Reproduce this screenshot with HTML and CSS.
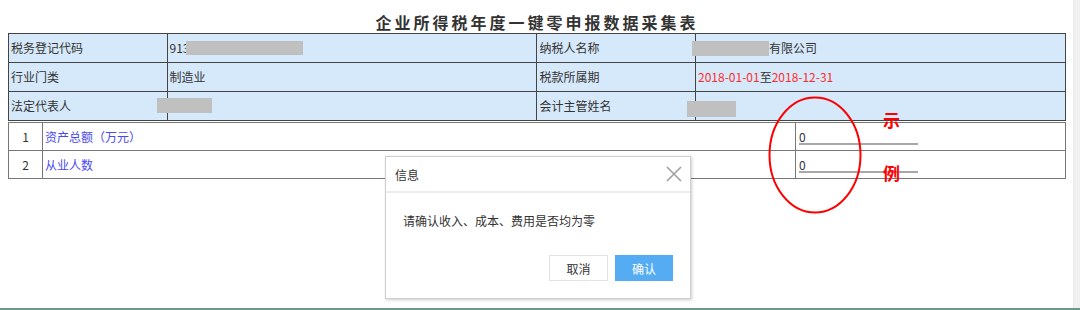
FILE: index.html
```html
<!DOCTYPE html>
<html lang="zh-CN">
<head>
    <meta charset="UTF-8">
    <meta name="viewport" content="width=device-width, initial-scale=1.0">
    <title>企业所得税年度一键零申报数据采集表</title>
    <link rel="stylesheet" href="styles.css">
</head>
<body>
    <div class="frame">
        <div class="main">
            <h3 class="title">企业所得税年度一键零申报数据采集表</h3>

            <table class="info">
                <tr>
                    <td class="label">税务登记代码</td>
                    <td>913</td>
                    <td class="label">纳税人名称</td>
                    <td class="company">有限公司</td>
                </tr>
                <tr>
                    <td class="label">行业门类</td>
                    <td>制造业</td>
                    <td class="label">税款所属期</td>
                    <td><span class="date">2018-01-01</span>至<span class="date">2018-12-31</span></td>
                </tr>
                <tr>
                    <td class="label">法定代表人</td>
                    <td></td>
                    <td class="label">会计主管姓名</td>
                    <td></td>
                </tr>
            </table>

            <table class="data">
                <tr>
                    <td class="num">1</td>
                    <td class="item">资产总额（万元）</td>
                    <td class="value"><input type="text" value="0" readonly></td>
                </tr>
                <tr>
                    <td class="num">2</td>
                    <td class="item">从业人数</td>
                    <td class="value"><input type="text" value="0" readonly></td>
                </tr>
            </table>

            <!-- redactions on the screenshot -->
            <span class="mask mask-code"></span>
            <span class="mask mask-name"></span>
            <span class="mask mask-legal"></span>
            <span class="mask mask-account"></span>

            <!-- example annotation -->
            <svg class="circle" width="96" height="120" viewBox="0 0 96 120">
                <ellipse cx="48" cy="60" rx="45.5" ry="57.5" fill="none" stroke="#f00" stroke-width="2"/>
            </svg>
            <span class="note note-top">示</span>
            <span class="note note-bottom">例</span>
        </div>
        <div class="scrollbar"></div>
    </div>
    <div class="bottom-line"></div>

    <div class="dialog">
        <div class="dialog-head">
            <span>信息</span>
            <svg class="close" width="16" height="16" viewBox="0 0 16 16">
                <path d="M1 1 L15 15 M15 1 L1 15" stroke="#a0a0a0" stroke-width="1.6" fill="none"/>
            </svg>
        </div>
        <div class="dialog-body">
            <p class="message">请确认收入、成本、费用是否均为零</p>
            <div class="buttons">
                <button class="btn btn-cancel">取消</button>
                <button class="btn btn-ok">确认</button>
            </div>
        </div>
    </div>
</body>
</html>
```
FILE: styles.css
```css
body {
    margin: 0;
    font-family: "Noto Sans CJK SC", "Liberation Sans", sans-serif;
    font-size: 12px;
    color: #333;
    background: #fff;
}
.frame {
    display: flex;
    height: 308px;
}
.main {
    position: relative;
    flex: 1;
    padding: 12px 7px 0 8px;
}
.scrollbar {
    width: 6px;
    background: #f1f1f1;
    border-left: 1px solid #ebebeb;
}
.bottom-line {
    height: 2px;
    background: #6b9a8a;
}
.title {
    margin: 0 0 1px;
    height: 20px;
    line-height: 20px;
    text-align: center;
    font-size: 16px;
    font-weight: bold;
    letter-spacing: 3px;
    color: #333;
}
table {
    width: 100%;
    border-collapse: collapse;
    border: 1px solid #222;
}
td {
    border: 1px solid #444;
    padding: 0 0 0 2px;
    line-height: 16px;
    white-space: nowrap;
}
.info td {
    height: 28px;
    width: 35%;
    background: #d6e9fb;
}
.info td.label {
    width: 15%;
}
.company {
    padding-left: 73px;
}
.date {
    color: #ff2b2b;
}
.data {
    margin-top: 1px;
}
.data td {
    height: 27px;
    border-color: #777;
}
.data .num {
    width: 33px;
    text-align: center;
    padding: 0;
}
.data .item {
    color: #4848f2;
}
.data .value {
    width: 266px;
    height: 20px;
    vertical-align: top;
    padding: 7px 0 0 3px;
}
.value input {
    display: block;
    width: 119px;
    height: 13px;
    padding: 0;
    border: none;
    border-bottom: 2px solid #a8a8a8;
    font: 12px/13px "Noto Sans CJK SC", "Liberation Sans", sans-serif;
    color: #334;
    outline: none;
    background: transparent;
}
.mask {
    position: absolute;
    background: #c0c0c0;
}
.mask-code {
    left: 186px;
    top: 41px;
    width: 117px;
    height: 14px;
}
.mask-name {
    left: 692px;
    top: 41px;
    width: 77px;
    height: 15px;
}
.mask-legal {
    left: 157px;
    top: 98px;
    width: 55px;
    height: 15px;
}
.mask-account {
    left: 687px;
    top: 101px;
    width: 49px;
    height: 16px;
}
.circle {
    position: absolute;
    left: 767px;
    top: 95px;
}
.note {
    position: absolute;
    left: 883px;
    font-size: 17px;
    line-height: 17px;
    font-weight: bold;
    color: #f00;
}
.note-top {
    top: 111px;
}
.note-bottom {
    top: 164px;
}
.dialog {
    position: absolute;
    left: 385px;
    top: 156px;
    width: 304px;
    background: #fff;
    border: 1px solid #cfcfcf;
    box-shadow: 1px 1px 3px rgba(0, 0, 0, 0.2);
}
.dialog-head {
    height: 34px;
    display: flex;
    align-items: center;
    justify-content: space-between;
    padding: 0 8px 0 9px;
    border-bottom: 2px solid #eee;
}
.dialog-body {
    padding: 18px 17px 17px 17px;
}
.message {
    margin: 0;
    line-height: 20px;
}
.buttons {
    display: flex;
    justify-content: flex-end;
    gap: 7px;
    margin-top: 24px;
}
.btn {
    height: 26px;
    padding: 0;
    font: 12px "Noto Sans CJK SC", "Liberation Sans", sans-serif;
    border: 1px solid #e2e2e2;
    cursor: pointer;
}
.btn-cancel {
    width: 59px;
    background: #fff;
    color: #333;
}
.btn-ok {
    width: 58px;
    background: #55acf2;
    border-color: #55acf2;
    color: #fff;
}
```
